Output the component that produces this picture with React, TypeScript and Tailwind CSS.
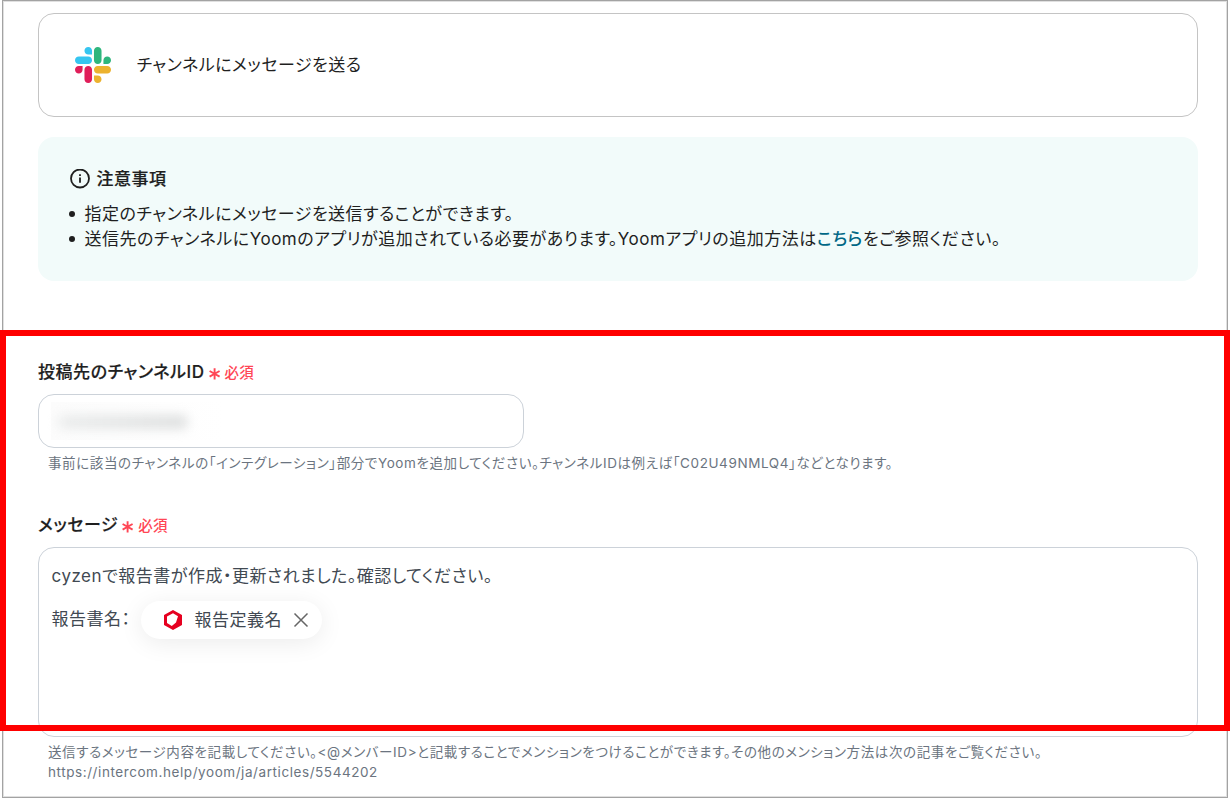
import type { ReactNode } from "react";

function SlackLogo() {
  return (
    <svg className="h-9 w-9 shrink-0" viewBox="0 0 122.8 122.8">
      <path fill="#E01E5A" d="M25.8 77.6c0 7.1-5.8 12.9-12.9 12.9S0 84.7 0 77.6s5.8-12.9 12.9-12.9h12.9v12.9zm6.5 0c0-7.1 5.8-12.9 12.9-12.9s12.9 5.8 12.9 12.9v32.3c0 7.1-5.8 12.9-12.9 12.9s-12.9-5.8-12.9-12.9V77.6z" />
      <path fill="#36C5F0" d="M45.2 25.8c-7.1 0-12.9-5.8-12.9-12.9S38.1 0 45.2 0s12.9 5.8 12.9 12.9v12.9H45.2zm0 6.5c7.1 0 12.9 5.8 12.9 12.9s-5.8 12.9-12.9 12.9H12.9C5.8 58.1 0 52.3 0 45.2s5.8-12.9 12.9-12.9h32.3z" />
      <path fill="#2EB67D" d="M97 45.2c0-7.1 5.8-12.9 12.9-12.9s12.9 5.8 12.9 12.9-5.8 12.9-12.9 12.9H97V45.2zm-6.5 0c0 7.1-5.8 12.9-12.9 12.9s-12.9-5.8-12.9-12.9V12.9C64.7 5.8 70.5 0 77.6 0s12.9 5.8 12.9 12.9v32.3z" />
      <path fill="#ECB22E" d="M77.6 97c7.1 0 12.9 5.8 12.9 12.9s-5.8 12.9-12.9 12.9-12.9-5.8-12.9-12.9V97h12.9zm0-6.5c-7.1 0-12.9-5.8-12.9-12.9s5.8-12.9 12.9-12.9h32.3c7.1 0 12.9 5.8 12.9 12.9s-5.8 12.9-12.9 12.9H77.6z" />
    </svg>
  );
}

function InfoIcon() {
  return (
    <svg className="h-5 w-5 shrink-0" viewBox="0 0 20 20" fill="none" stroke="#1f1f1f" strokeWidth="1.8">
      <circle cx="10" cy="9.5" r="9" />
      <path d="M10 8.5v5.2M10 5.2v1.8" />
    </svg>
  );
}

function Asterisk() {
  return (
    <svg className="mt-[5px] ml-[4px] h-3 w-3 shrink-0" viewBox="0 0 12 12" fill="none" stroke="#ff4655" strokeWidth="1.9">
      <path d="M5.6 0.2v11.2M0.6 3l10 5.6M10.6 3L0.6 8.6" />
    </svg>
  );
}

function FieldLabel({ children }: { children: ReactNode }) {
  return (
    <div className="flex h-[26px] items-center text-[17px] leading-[26px] font-medium tracking-[0.55px] text-[#1f1f1f]">
      <span className="mt-[2px] [-webkit-text-stroke:0.2px_#1f1f1f]">{children}</span>
      <Asterisk />
      <span className="mt-[3px] ml-1 text-[14.5px] tracking-[0.3px] text-[#ff4655]">必須</span>
    </div>
  );
}

function VariableChip() {
  return (
    <span className="ml-[10px] flex h-[38px] w-[181px] items-center rounded-full bg-white pl-[23px] shadow-[0_4px_24px_rgba(0,0,0,0.08)]">
      <svg className="h-5 w-[18px] shrink-0" viewBox="0 0 18 20">
        <path fill="#e60020" fillRule="evenodd" d="M9 0L18 5V15L9 20L0 15V5ZM9 3.2L3 6.6V13L7.8 16L12 12.6L14 6.2Z" />
      </svg>
      <span className="ml-[13px]">報告定義名</span>
      <svg className="ml-[11px] h-4 w-4 shrink-0" viewBox="0 0 16 16" fill="none" stroke="#666" strokeWidth="1.5">
        <path d="M1.5 1.5l13 13M14.5 1.5l-13 13" />
      </svg>
    </span>
  );
}

export default function App() {
  return (
    <div className="relative h-[798px] w-[1230px] overflow-hidden bg-white pl-[2px] font-['Inter','Noto_Sans_CJK_JP',sans-serif] whitespace-nowrap [font-feature-settings:'palt']">
      <main className="flex h-[798px] w-[1226px] flex-col border border-[#a3a3a3] pt-3 pr-[29px] pl-[35px] shadow-[inset_0_0_0_1px_#e0e0e0]">
        <section className="flex h-[104px] shrink-0 items-center rounded-2xl border border-[#c4c4c4] pl-9">
          <SlackLogo />
          <h1 className="mt-[2px] ml-[25.5px] text-[17px] tracking-[0.5px] text-[#1f1f1f]">チャンネルにメッセージを送る</h1>
        </section>

        <section className="mt-5 h-[144px] shrink-0 rounded-2xl bg-[#f2fbfa] pt-[29px] pl-[31.5px] text-[17px] leading-[26px] tracking-[0.5px] text-[#1f1f1f]">
          <h2 className="flex items-center gap-[7px] font-medium">
            <InfoIcon />
            <span className="[-webkit-text-stroke:0.2px_#1f1f1f]">注意事項</span>
          </h2>
          <ul className="mt-[9px]">
            <li className="flex h-[25px] items-center gap-[9.5px]">
              <i className="-ml-[0.5px] h-[6px] w-[6px] rounded-full bg-[#1f1f1f]" />
              <span>指定のチャンネルにメッセージを送信することができます。</span>
            </li>
            <li className="flex h-[26px] items-center gap-[9.5px]">
              <i className="-ml-[0.5px] h-[6px] w-[6px] rounded-full bg-[#1f1f1f]" />
              <span className="tracking-[0.52px]">
                送信先のチャンネルにYoomのアプリが追加されている必要があります。Yoomアプリの追加方法は
                <a className="font-medium text-[#006785]">こちら</a>
                をご参照ください。
              </span>
            </li>
          </ul>
        </section>

        <section className="mt-[77px] shrink-0">
          <FieldLabel>投稿先のチャンネルID</FieldLabel>
          <div className="mt-[10px] flex h-[54px] w-[486px] items-center rounded-2xl border border-[#ccd2d9] pl-[12px]">
            <div className="flex h-[38px] w-[174px] items-center bg-linear-to-r from-[#fcfcfc] to-white pl-[8px]">
              <div className="mt-[2px] h-[12px] w-[128px] rounded bg-linear-to-r from-[#e8eaea] to-[#d8dada] blur-[6px]" />
            </div>
          </div>
          <p className="mt-[5px] ml-[10px] text-[13.5px] leading-5 tracking-[0.6px] text-[#6b7480]">
            事前に該当のチャンネルの「インテグレーション」部分でYoomを追加してください。チャンネルIDは例えば「C02U49NMLQ4」などとなります。
          </p>
        </section>

        <section className="mt-[38px] shrink-0">
          <FieldLabel>メッセージ</FieldLabel>
          <div className="mt-[10px] h-[190px] rounded-2xl border border-[#ccd2d9] pt-[15px] pl-[12.5px] text-[17px] leading-[26px] tracking-[0.5px] text-[#414952]">
            <p>cyzenで報告書が作成・更新されました。確認してください。</p>
            <p className="mt-[11.5px] flex items-center">
              <span className="-mt-[2px]">報告書名：</span>
              <VariableChip />
            </p>
          </div>
          <p className="mt-[5px] ml-[10px] text-[13.5px] leading-5 tracking-[0.61px] text-[#6b7480]">
            送信するメッセージ内容を記載してください。&lt;@メンバーID&gt;と記載することでメンションをつけることができます。その他のメンション方法は次の記事をご覧ください。
            <br />
            <span className="tracking-[0.57px]">https://intercom.help/yoom/ja/articles/5544202</span>
          </p>
        </section>
      </main>

      <div className="absolute top-[330px] left-0 h-[401px] w-[1230px] border-[6px] border-[#ff0000]" />
    </div>
  );
}
